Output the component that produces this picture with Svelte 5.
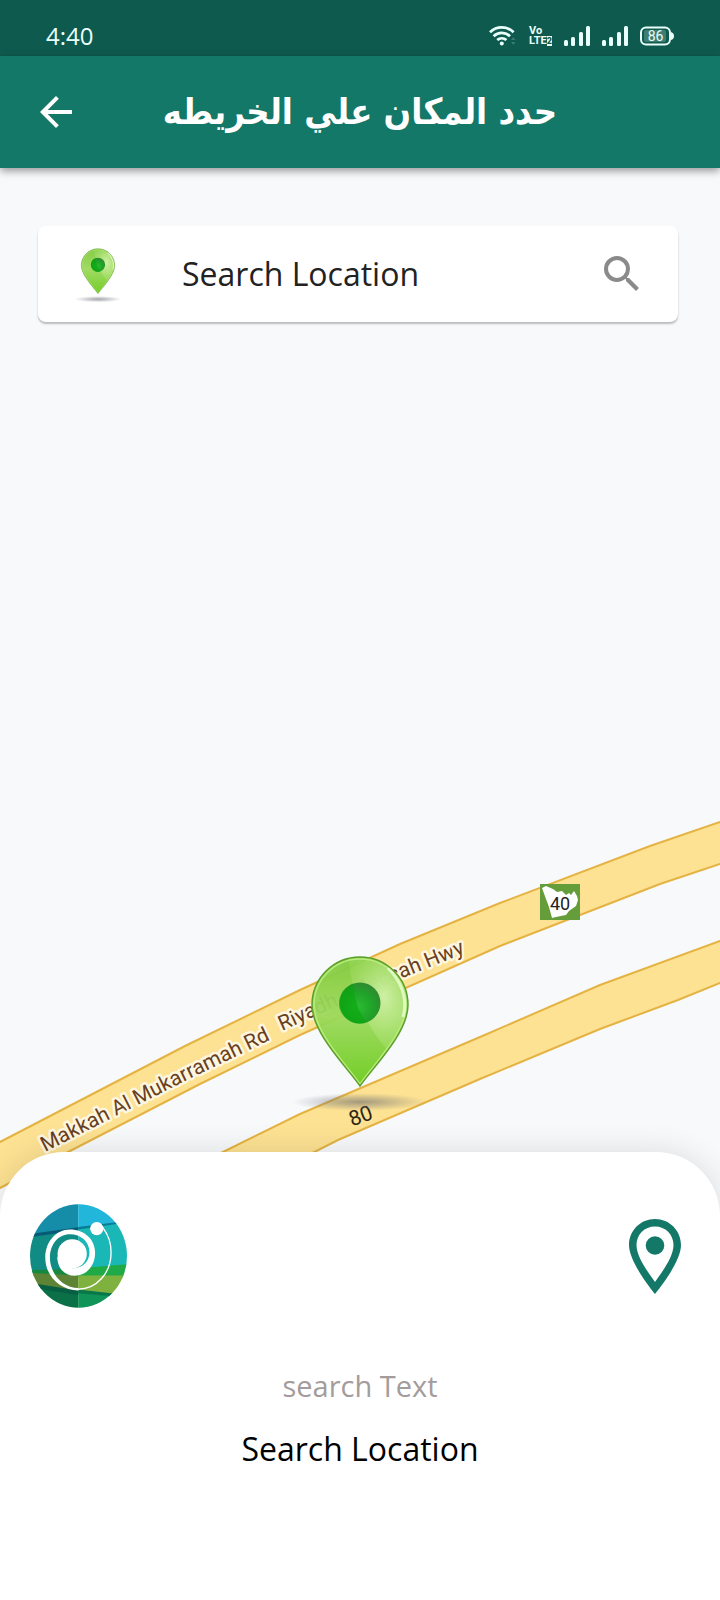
<script>
	let query = "Search Location";

	const signals = [1, 2];
	const bars = [
		{ x: 0, height: 6 },
		{ x: 7, height: 9 },
		{ x: 15, height: 14 },
		{ x: 22, height: 20 },
	];
</script>

<div class="screen">
	<div class="status">
		<span class="time">4:40</span>
		<div class="indicators">
			<svg class="wifi" viewBox="0 0 28 20" width="28" height="20">
				<g fill="none" stroke="#e9fffb" stroke-width="2.8">
					<path d="M1 6.2a17 17 0 0 1 23.600 0" />
					<path d="M4.600 10.200a12 12 0 0 1 16.400 0" />
					<path d="M8.200 14a7 7 0 0 1 9.200 0" />
				</g>
				<circle cx="12.800" cy="17.500" r="2" fill="#e9fffb" />
				<path d="M22 14l2.300-2.800 2.300 2.800zM22 16l2.300 2.800 2.300-2.800z" fill="#3a7d70" />
			</svg>
			<div class="volte">
				<span>Vo</span>
				<span>LTE<b>2</b></span>
			</div>
			{#each signals as signal (signal)}
				<svg viewBox="0 0 26 20" width="26" height="20">
					{#each bars as bar}
						<rect x={bar.x} y={20 - bar.height} width="4" height={bar.height} rx="1.500" fill="#e9fffb" />
					{/each}
				</svg>
			{/each}
			<svg class="battery" viewBox="0 0 34 20" width="34" height="20">
				<rect x="1" y="1.500" width="29" height="17" rx="5" fill="none" stroke="#e9fffb" stroke-width="2" />
				<rect x="4" y="4" width="22" height="12" rx="2" fill="#3f7d70" />
				<path d="M31 6q3 1 3 4t-3 4z" fill="#e9fffb" />
				<text x="15.500" y="15" text-anchor="middle">86</text>
			</svg>
		</div>
	</div>

	<header>
		<button class="back" aria-label="Back">
			<svg viewBox="0 0 24 24" width="48" height="48">
				<path fill="#fff" d="M20 11H7.830l5.590-5.590L12 4l-8 8 8 8 1.410-1.410L7.830 13H20z" />
			</svg>
		</button>
		<h1 lang="ar" dir="rtl">حدد المكان علي الخريطه</h1>
	</header>

	<main>
		<svg class="map" viewBox="0 168 720 1048" preserveAspectRatio="xMidYMax slice">
			<defs>
				<linearGradient id="pinBody" x1="0" y1="0" x2="0" y2="1">
					<stop offset="0" stop-color="#7fca3c" />
					<stop offset="0.450" stop-color="#9cd95c" />
					<stop offset="1" stop-color="#6bcb1a" />
				</linearGradient>
				<radialGradient id="pinGlow" cx="0.500" cy="0.450" r="0.600">
					<stop offset="0" stop-color="#d5f3ae" stop-opacity="0.900" />
					<stop offset="1" stop-color="#a6df68" stop-opacity="0.200" />
				</radialGradient>
				<radialGradient id="pinDot" cx="0.450" cy="0.600" r="0.600">
					<stop offset="0" stop-color="#2cbb33" />
					<stop offset="0.600" stop-color="#1fa328" />
					<stop offset="1" stop-color="#2f8a32" />
				</radialGradient>
				<radialGradient id="pinShadow">
					<stop offset="0" stop-color="#585b66" stop-opacity="0.550" />
					<stop offset="0.500" stop-color="#666974" stop-opacity="0.300" />
					<stop offset="1" stop-color="#777" stop-opacity="0" />
				</radialGradient>
				<clipPath id="pinClip">
					<path d="M80 137C66 117 32 84 32 56a48 48 0 0 1 96 0C128 84 94 117 80 137z" />
				</clipPath>
				<symbol id="pin" viewBox="0 0 160 164">
					<ellipse cx="80" cy="153" rx="68" ry="9" fill="url(#pinShadow)" />
					<path
						d="M80 137C66 117 32 84 32 56a48 48 0 0 1 96 0C128 84 94 117 80 137z"
						fill="url(#pinBody)"
						fill-opacity="0.950"
					/>
					<g clip-path="url(#pinClip)">
						<path d="M68 0Q70 62 112 106L140 90V0z" fill="url(#pinGlow)" />
						<path
							d="M80 135C66 115 34 83 34 56a46 46 0 0 1 92 0C126 83 94 115 80 135z"
							fill="none"
							stroke="#b9ea7c"
							stroke-width="1.500"
						/>
						<path d="M108 19Q130 42 123 68" fill="none" stroke="#eaffd2" stroke-width="3" opacity="0.800" />
					</g>
					<path
						d="M80 137C66 117 32 84 32 56a48 48 0 0 1 96 0C128 84 94 117 80 137z"
						fill="none"
						stroke="#5c9f2c"
						stroke-width="1.500"
					/>
					<circle cx="80" cy="54" r="20.500" fill="url(#pinDot)" />
					<path d="M73 34.700Q74 55 86 73.600A20.500 20.500 0 0 1 73 34.700z" fill="#06a60a" opacity="0.600" />
				</symbol>
				<path id="makkahLine" d="M45 1152L185 1081 330 1011" />
				<path id="riyadhLine" d="M282 1031L380 987 500 939" />
			</defs>

			<g fill="#fde293" stroke="#e4b343" stroke-width="2">
				<path
					d="M-10 1147L0 1142 185 1046 300 990 400 944 500 903 650 846 720 822 740 816V858L720 864 660 884 500 946 300 1035 200 1084 70 1151 0 1188-10 1193z"
				/>
				<path
					d="M120 1201L223 1152 300 1114 480 1037 600 985 720 941 740 934V976L720 983 678 1000 600 1029 480 1079 338 1140 200 1210z"
				/>
			</g>

			<g class="road-names">
				<text><textPath href="#makkahLine">Makkah Al Mukarramah Rd</textPath></text>
				<text><textPath href="#riyadhLine">Riyadh - Meccah Hwy</textPath></text>
				<text class="number" x="360" y="1123" text-anchor="middle" transform="rotate(-20 360 1114)">80</text>
			</g>

			<rect x="540" y="884" width="40" height="36" fill="#659d3a" />
			<path
				d="M542 888L546 886 553 889 557 892 562 891 566 895 569 893 571 895 574 891 577 896 578 900 576 906 569 911 566 915 556 917 552 918 549 907 546 899z"
				fill="#fff"
			/>
			<text class="shield" x="560" y="910" text-anchor="middle">40</text>

			<use href="#pin" x="280" y="949" width="160" height="164" />
		</svg>

		<form class="search" on:submit|preventDefault>
			<svg width="56" height="57" viewBox="0 0 160 164"><use href="#pin" width="160" height="164" /></svg>
			<input type="text" aria-label="Location" bind:value={query} />
			<button aria-label="Search">
				<svg viewBox="0 0 24 24" width="48" height="48">
					<path
						fill="#8a8a8a"
						d="M15.500 14h-.790l-.280-.270A6.470 6.470 0 0 0 16 9.500 6.500 6.500 0 1 0 9.500 16c1.610 0 3.090-.590 4.230-1.570l.270.280v.790l5 4.990L20.490 19l-4.990-5zm-6 0A4.500 4.500 0 1 1 9.500 5a4.500 4.500 0 0 1 0 9z"
					/>
				</svg>
			</button>
		</form>
	</main>

	<section class="sheet">
		<div class="row">
			<svg class="logo" viewBox="44 44 292 311" width="97" height="104">
				<defs>
					<clipPath id="logoClip"><ellipse cx="190" cy="199.500" rx="146" ry="155.500" /></clipPath>
				</defs>
				<g clip-path="url(#logoClip)">
					<path fill="#158da9" d="M40 40h149v80L40 142z" />
					<path fill="#22b6da" d="M189 40h151v60L189 115z" />
					<path fill="#118c85" d="M40 142l149-22v130H40z" />
					<path fill="#19b8b6" d="M189 113l151-17v140H189z" />
					<path fill="#075a74" d="M40 134l149-21v9L40 144z" />
					<path fill="#087c96" d="M189 112l115-14v5l-115 17z" />
					<path fill="#168840" d="M40 242l149-4v26H40z" />
					<path fill="#20a947" d="M189 236l151-12v42H189z" />
					<path fill="#5d8434" d="M40 250l149 8v60L40 290z" />
					<path fill="#7fb13e" d="M189 258h151v62l-151-15z" />
					<path fill="#0b7047" d="M40 288l149 25v50H40z" />
					<path fill="#109457" d="M189 304l151 13v50H189z" />
					<path fill="#075e43" d="M40 280l149 23v14L40 293z" />
					<path fill="#08784b" d="M189 300l120 14-25 6-95-8z" />
				</g>
				<circle cx="171" cy="193" r="44" fill="#fff" />
				<path
					d="M190 303C135 303 90 260 90 205 90 157 122 120 164 120 208 120 240 150 240 190 240 230 213 259 178 259 150 259 126 238 126 200L160 235C198 242 223 218 223 188 223 157 198 134 164 134 130 134 104 163 104 205 104 252 142 296 190 296z"
					fill="#fff"
				/>
				<path
					d="M188 299.500C245 300 288 250 288 190 288 160 282 140 262 112"
					fill="none"
					stroke="#fff"
					stroke-width="4"
				/>
				<circle cx="245" cy="117" r="20" fill="#fff" />
			</svg>
			<button class="locate" aria-label="Pick on map">
				<svg viewBox="0 0 52 75" width="52" height="75">
					<path
						fill="#147868"
						fill-rule="evenodd"
						d="M26 0C11.500 0 0 11.500 0 26c0 18 26 49 26 49s26-31 26-49C52 11.500 40.500 0 26 0zm0 7.500C36.500 7.500 44.500 15.500 44.500 26 44.500 38 33 53 26 63 19 53 7.500 38 7.500 26 7.500 15.500 15.500 7.500 26 7.500z"
					/>
					<circle cx="26" cy="26.500" r="9.300" fill="#147868" />
				</svg>
			</button>
		</div>
		<p class="hint">search Text</p>
		<p class="place">{query}</p>
	</section>
</div>

<style>
	:global(body) {
		margin: 0;
		background: #fff;
	}

	.screen {
		display: flex;
		flex-direction: column;
		min-height: 100vh;
		font-family: "Open Sans", "Noto Sans", sans-serif;
		overflow: hidden;
	}

	button {
		display: flex;
		padding: 0;
		border: 0;
		background: none;
		cursor: pointer;
	}

	.status {
		display: flex;
		align-items: center;
		justify-content: space-between;
		box-sizing: border-box;
		height: 56px;
		padding: 16px 46px 0;
		background: #0f5a4e;
		color: #e9fffb;
	}

	.time {
		font-size: 24px;
		line-height: 40px;
	}

	.indicators {
		display: flex;
		align-items: center;
		gap: 12px;
	}

	.volte {
		display: flex;
		flex-direction: column;
		font: bold 11px/10px "Roboto", sans-serif;
	}

	.volte b {
		background: #e9fffb;
		color: #0f5a4e;
		font-size: 9px;
	}

	.battery text {
		font: 14px "Roboto", sans-serif;
		fill: #e9fffb;
	}

	header {
		position: relative;
		z-index: 1;
		display: grid;
		grid-template-columns: 48px 1fr 48px;
		align-items: center;
		height: 112px;
		padding: 0 32px;
		background: #147868;
		box-shadow: 0 3px 8px rgba(0, 0, 0, 0.4);
	}

	h1 {
		margin: 0;
		color: #fff;
		font: bold 36px/64px "DejaVu Sans Condensed", "DejaVu Sans", sans-serif;
		text-align: center;
		white-space: nowrap;
	}

	main {
		position: relative;
		flex: 1;
		padding: 58px 42px 120px 38px;
		background: #f8f9fb;
	}

	.map {
		position: absolute;
		inset: 0;
		width: 100%;
		height: 100%;
	}

	.road-names text {
		font: 21px "Roboto", sans-serif;
		fill: #66401f;
		stroke: #fff6e0;
		stroke-width: 5px;
		stroke-linejoin: round;
		paint-order: stroke;
	}

	.road-names .number {
		fill: #2c2416;
		stroke: none;
	}

	.shield {
		font: 18px "Roboto", sans-serif;
		fill: #222;
	}

	.search {
		position: relative;
		display: flex;
		align-items: center;
		box-sizing: border-box;
		height: 96px;
		padding: 0 32px;
		border-radius: 8px;
		background: #fff;
		box-shadow: 0 2px 2px rgba(0, 0, 0, 0.25);
	}

	.search input {
		flex: 1;
		min-width: 0;
		margin-left: 56px;
		padding: 0;
		border: 0;
		outline: 0;
		background: none;
		color: #222;
		font: 32px/48px "Open Sans", sans-serif;
	}

	.sheet {
		position: relative;
		box-sizing: border-box;
		min-height: 448px;
		margin-top: -64px;
		padding: 52px 0 32px;
		border-radius: 64px 64px 0 0;
		background: #fff;
		box-shadow: 0 0 32px rgba(0, 0, 0, 0.12);
	}

	.row {
		display: flex;
		align-items: center;
		justify-content: space-between;
		padding: 0 39px 0 30px;
	}

	.sheet p {
		margin: 0;
		text-align: center;
	}

	.sheet .hint {
		margin-top: 54px;
		color: #a39c9c;
		font-size: 29px;
		line-height: 48px;
	}

	.sheet .place {
		margin-top: 15px;
		color: #000;
		font-size: 32px;
		line-height: 48px;
	}
</style>
